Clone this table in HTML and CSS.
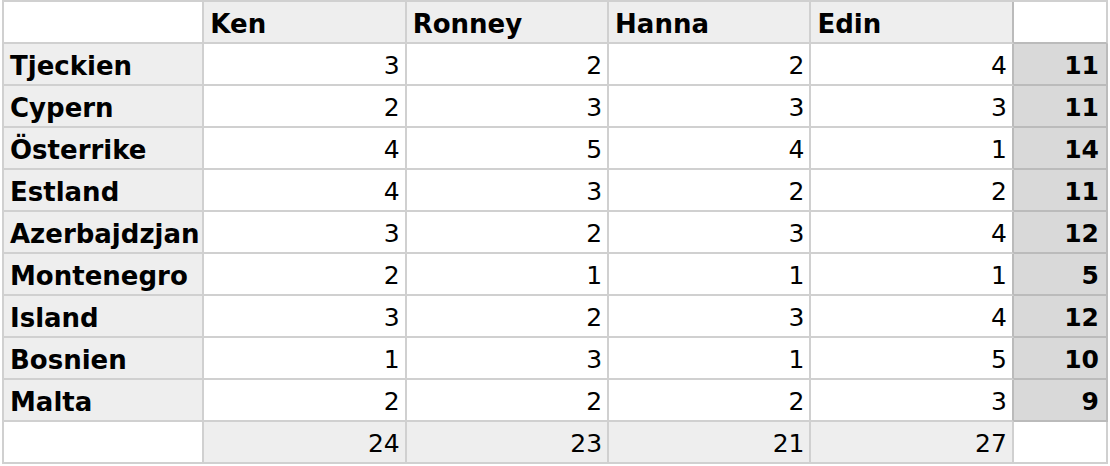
FILE: index.html
```html
<!DOCTYPE html>
<html>
<head>
<meta charset="utf-8">
<link rel="stylesheet" href="styles.css">
</head>
<body>
<table class="score">
  <thead>
    <tr>
      <th class="corner"></th>
      <th class="name">Ken</th>
      <th class="name">Ronney</th>
      <th class="name">Hanna</th>
      <th class="name last">Edin</th>
      <th class="blank-total"></th>
    </tr>
  </thead>
  <tbody>
    <tr><th class="country">Tjeckien</th><td>3</td><td>2</td><td>2</td><td class="last">4</td><td class="total">11</td></tr>
    <tr><th class="country">Cypern</th><td>2</td><td>3</td><td>3</td><td class="last">3</td><td class="total">11</td></tr>
    <tr><th class="country">Österrike</th><td>4</td><td>5</td><td>4</td><td class="last">1</td><td class="total">14</td></tr>
    <tr><th class="country">Estland</th><td>4</td><td>3</td><td>2</td><td class="last">2</td><td class="total">11</td></tr>
    <tr><th class="country">Azerbajdzjan</th><td>3</td><td>2</td><td>3</td><td class="last">4</td><td class="total">12</td></tr>
    <tr><th class="country">Montenegro</th><td>2</td><td>1</td><td>1</td><td class="last">1</td><td class="total">5</td></tr>
    <tr><th class="country">Island</th><td>3</td><td>2</td><td>3</td><td class="last">4</td><td class="total">12</td></tr>
    <tr><th class="country">Bosnien</th><td>1</td><td>3</td><td>1</td><td class="last">5</td><td class="total">10</td></tr>
    <tr><th class="country">Malta</th><td>2</td><td>2</td><td>2</td><td class="last">3</td><td class="total">9</td></tr>
  </tbody>
  <tfoot>
    <tr>
      <td class="corner"></td>
      <td class="sum">24</td>
      <td class="sum">23</td>
      <td class="sum">21</td>
      <td class="sum">27</td>
      <td class="blank-total"></td>
    </tr>
  </tfoot>
</table>
</body>
</html>
```

FILE: styles.css
```css
html, body {
  margin: 0;
  background: #ffffff;
}
body {
  padding: 0 0 0 2px;
  font-family: "DejaVu Sans", Verdana, sans-serif;
  font-size: 25px;
  color: #000;
}
.score {
  border-collapse: separate;
  border-spacing: 0;
  table-layout: fixed;
  width: 1106px;
  border-top: 2px solid #d0d0d0;
  border-left: 2px solid #d0d0d0;
}
.score th,
.score td {
  box-sizing: border-box;
  height: 42px;
  padding: 3px 5px 0 6px;
  border-right: 2px solid #d0d0d0;
  border-bottom: 2px solid #d0d0d0;
  width: 202px;
  white-space: nowrap;
  overflow: hidden;
  line-height: 36px;
}
.score th {
  font-weight: bold;
  font-size: 26px;
  text-align: left;
  background: #eeeeee;
}
.score td {
  text-align: right;
  background: #ffffff;
}
.score .corner {
  background: #ffffff;
  width: 200px;
}
.score .blank-total {
  width: 94px;
  background: #ffffff;
}
.score thead .blank-total {
  border-bottom-color: #bbbbbb;
}
.score .last {
  border-right-color: #bbbbbb;
}
.score .total {
  width: 94px;
  font-weight: bold;
  padding-right: 7px;
  background: #d9d9d9;
  border-right-color: #bbbbbb;
  border-bottom-color: #bbbbbb;
}
.score .sum {
  background: #eeeeee;
}
```
